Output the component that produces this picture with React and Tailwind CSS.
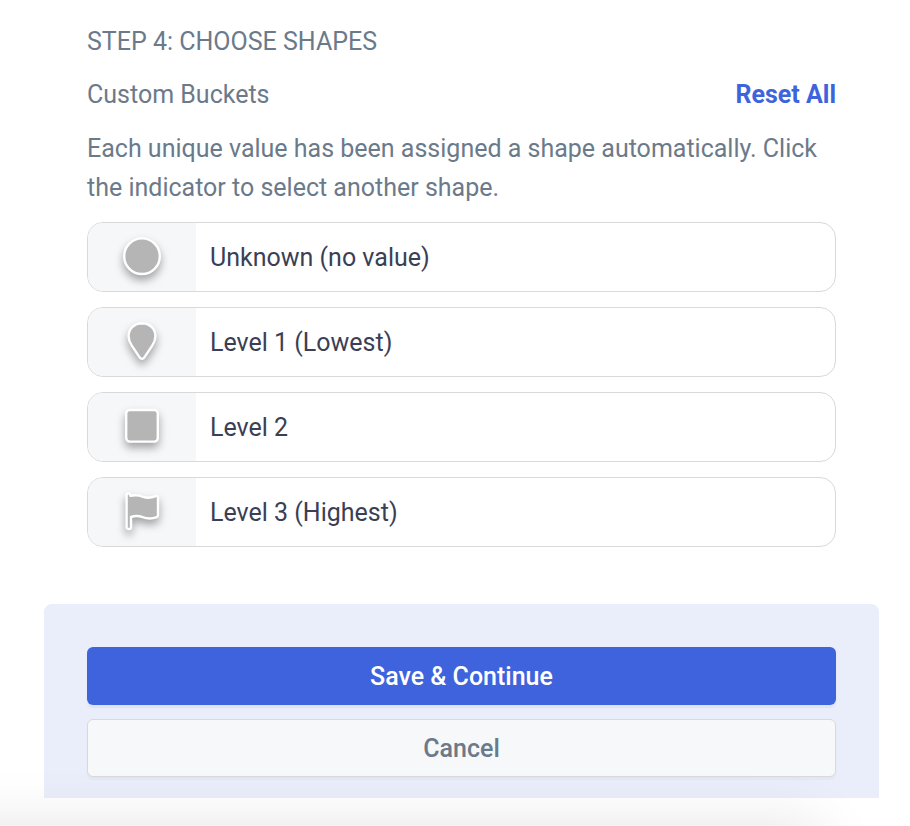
import React, { useState } from 'react';

const SHAPES = ['circle', 'pin', 'square', 'flag'];

const DEFAULT_BUCKETS = [
  { id: 'unknown', label: 'Unknown (no value)', shape: 'circle' },
  { id: 'level-1', label: 'Level 1 (Lowest)', shape: 'pin' },
  { id: 'level-2', label: 'Level 2', shape: 'square' },
  { id: 'level-3', label: 'Level 3 (Highest)', shape: 'flag' },
];

function ShapeIcon({ shape }) {
  return (
    <svg
      viewBox="0 0 48 48"
      className="w-12 h-12 overflow-visible drop-shadow-[0_5px_4px_rgba(0,0,0,0.34)]"
      fill="#b5b5b5"
      stroke="#fff"
      strokeWidth="2.4"
      strokeLinejoin="round"
      aria-hidden="true"
    >
      {shape === 'circle' && <circle cx="24" cy="23.2" r="17.8" />}
      {shape === 'pin' && (
        <path d="M24 5.2C16.4 5.2 10.6 10.8 10.6 18.2C10.6 21.6 11.8 24.6 13.8 27.6L21.8 39.6C22.9 41.2 25.1 41.2 26.2 39.6L34.2 27.6C36.2 24.6 37.4 21.6 37.4 18.2C37.4 10.8 31.6 5.2 24 5.2Z" />
      )}
      {shape === 'square' && <rect x="8.2" y="7" width="31.6" height="31.6" rx="3.6" />}
      {shape === 'flag' && (
        <path d="M8.6 7.4C8.6 4.8 12.2 4.8 12.4 7.9C17 6.6 20.5 7 25 8.8C29.8 10.5 33.5 9.8 37.8 8.2C39.1 7.7 40 8.4 40 9.6V27.2C40 28.3 39.5 28.9 38.6 29.2C33.5 31.2 29 30.8 24.5 29.1C20.5 27.5 17 27.6 13 29V39.2C13 41.6 8.6 41.6 8.6 39.2Z" />
      )}
    </svg>
  );
}

function BucketRow({ bucket, onChangeShape }) {
  return (
    <li className="h-[70px] flex items-center rounded-2xl border border-[#d9d9d9] bg-white overflow-hidden">
      <button
        type="button"
        onClick={() => onChangeShape(bucket.id)}
        aria-label={`Select another shape for ${bucket.label}`}
        className="w-[108px] h-full shrink-0 flex items-center justify-center bg-[#f6f7f9] cursor-pointer"
      >
        <ShapeIcon shape={bucket.shape} />
      </button>
      <span className="px-[14px] text-[#3b3f55]">{bucket.label}</span>
    </li>
  );
}

export default function App() {
  const [buckets, setBuckets] = useState(DEFAULT_BUCKETS);

  // Step to the next shape in the list
  const changeShape = (id) => {
    setBuckets((prev) =>
      prev.map((b) =>
        b.id === id ? { ...b, shape: SHAPES[(SHAPES.indexOf(b.shape) + 1) % SHAPES.length] } : b
      )
    );
  };

  return (
    <div className="relative min-h-screen overflow-hidden bg-white pl-[44px] pr-[31px] pt-[22px] font-[Roboto,sans-serif] text-[25px] leading-[39px] text-[#6b7a8a]">
      <main className="px-[43px]">
        <h2 className="uppercase">Step 4: Choose Shapes</h2>

        <div className="mt-[14px] flex items-center justify-between">
          <h3>Custom Buckets</h3>
          <button
            type="button"
            onClick={() => setBuckets(DEFAULT_BUCKETS)}
            className="font-bold text-[#3e63dd] cursor-pointer"
          >
            Reset All
          </button>
        </div>

        <p className="mt-[15px]">
          Each unique value has been assigned a shape automatically. Click the indicator to select
          another shape.
        </p>

        <ul className="mt-[15px] flex flex-col gap-[15px]">
          {buckets.map((bucket) => (
            <BucketRow key={bucket.id} bucket={bucket} onChangeShape={changeShape} />
          ))}
        </ul>
      </main>

      {/* Actions */}
      <footer className="mt-[57px] flex flex-col gap-[14px] rounded-t-lg bg-[#eaeefb] px-[43px] pt-[43px] pb-[21px] font-medium">
        <button
          type="button"
          className="h-[58px] rounded-md bg-[#3e63dd] text-white shadow-[0_3px_2px_rgba(0,0,0,0.05)] cursor-pointer"
        >
          Save &amp; Continue
        </button>
        <button
          type="button"
          className="h-[58px] rounded-md border border-[#d9d9d9] bg-[#f6f8fa] shadow-[0_3px_2px_rgba(0,0,0,0.03)] cursor-pointer"
        >
          Cancel
        </button>
      </footer>

      {/* Soft shadow along the bottom edge */}
      <div className="pointer-events-none absolute top-full -left-20 right-[90px] h-40 shadow-[0_0_60px_rgba(0,0,0,0.11)]" />
    </div>
  );
}
